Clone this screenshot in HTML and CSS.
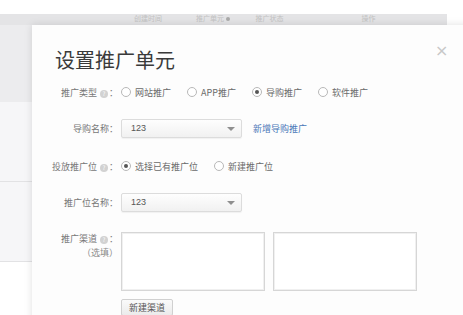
FILE: index.html
```html
<!DOCTYPE html>
<html lang="zh-CN">

<head>
  <meta charset="UTF-8">
  <meta name="viewport" content="width=device-width, initial-scale=1.0">
  <title>设置推广单元</title>
  <link rel="stylesheet" href="styles.css">
</head>

<body>
  <div class="page">
    <div class="thead">
      <span class="th th-time">创建时间</span>
      <span class="th th-unit">推广单元 <i class="dot"></i></span>
      <span class="th th-state">推广状态</span>
      <span class="th th-op">操作</span>
    </div>
    <div class="trow trow-grey"></div>
    <div class="trow"></div>
    <div class="trow"></div>
  </div>

  <div class="modal">
    <span class="close">&times;</span>
    <h2 class="modal-title">设置推广单元</h2>

    <div class="form">
      <div class="form-row">
        <div class="label">推广类型<i class="help">?</i>：</div>
        <div class="field">
          <label class="radio"><i class="circle"></i>网站推广</label>
          <label class="radio"><i class="circle"></i>APP推广</label>
          <label class="radio"><i class="circle checked"></i>导购推广</label>
          <label class="radio"><i class="circle"></i>软件推广</label>
        </div>
      </div>

      <div class="form-row row-select">
        <div class="label">导购名称：</div>
        <div class="field">
          <div class="select">123<i class="caret"></i></div>
          <a class="link" href="#">新增导购推广</a>
        </div>
      </div>

      <div class="form-row">
        <div class="label">投放推广位<i class="help">?</i>：</div>
        <div class="field">
          <label class="radio"><i class="circle checked"></i>选择已有推广位</label>
          <label class="radio"><i class="circle"></i>新建推广位</label>
        </div>
      </div>

      <div class="form-row row-select">
        <div class="label">推广位名称：</div>
        <div class="field">
          <div class="select">123<i class="caret"></i></div>
        </div>
      </div>

      <div class="form-row row-channel">
        <div class="label">推广渠道<i class="help">?</i>：<br><span class="optional">（选填）</span></div>
        <div class="field field-top">
          <div class="channels">
            <div class="box"></div>
            <div class="box"></div>
          </div>
          <button class="btn">新建渠道</button>
        </div>
      </div>
    </div>
  </div>
</body>

</html>
```

FILE: styles.css
```css
body {
  margin: 0;
  width: 463px;
  height: 315px;
  overflow: hidden;
  position: relative;
  background-color: #ffffff;
  font-family: 'Noto Sans CJK SC', 'Noto Sans', sans-serif;
  font-size: 9px;
  color: #666;
}

/* page behind the dialog */
.page {
  padding-top: 14px;
}

.thead {
  height: 11px;
  background-color: #e4e4e6;
  margin-right: 16px;
  display: flex;
  font-size: 7px;
  line-height: 9px;
  color: #c2c2c2;
}

.th {
  display: block;
}

.th-time {
  margin-left: 134px;
}

.th-unit {
  margin-left: 34px;
}

.th-state {
  margin-left: 26px;
}

.th-op {
  margin-left: 78px;
}

.dot {
  display: inline-block;
  width: 4px;
  height: 4px;
  border-radius: 50%;
  background-color: #aaa;
}

.trow {
  height: 79px;
  background-color: #f6f6f8;
  border-bottom: 1px solid #e2e2e4;
}

.trow-grey {
  height: 77px;
  background-color: #ececee;
  border-bottom: none;
}

/* dialog */
.modal {
  position: absolute;
  left: 32px;
  top: 25px;
  width: 460px;
  height: 320px;
  background-color: #fdfdfd;
  box-shadow: 0 0 8px rgba(0, 0, 0, 0.12);
}

.close {
  position: absolute;
  left: 403px;
  top: 16px;
  font-family: 'DejaVu Sans', sans-serif;
  font-size: 16px;
  color: #c8c8c8;
}

.modal-title {
  margin: 20px 0 0 23px;
  font-size: 20px;
  line-height: 30px;
  font-weight: normal;
  color: #3a3a3a;
}

.form {
  margin-top: 7px;
}

.form-row {
  display: flex;
  align-items: center;
  height: 20px;
  margin-bottom: 16px;
}

.row-select {
  margin-bottom: 18px;
}

.label {
  width: 86px;
  text-align: right;
  color: #777;
  flex-shrink: 0;
}

.help {
  display: inline-block;
  width: 8px;
  height: 8px;
  line-height: 8px;
  border-radius: 50%;
  background-color: #d2d2d2;
  color: #fff;
  font-size: 6px;
  font-style: normal;
  text-align: center;
  margin: 0 1px 0 3px;
  vertical-align: 0;
}

.field {
  display: flex;
  align-items: center;
  margin-left: 3px;
}

.radio {
  display: flex;
  align-items: center;
  margin-right: 16px;
  color: #6a6a6a;
}

.circle {
  display: inline-block;
  box-sizing: border-box;
  width: 10px;
  height: 10px;
  border: 1px solid #b8b8b8;
  border-radius: 50%;
  background-color: #fff;
  margin-right: 4px;
  position: relative;
}

.circle.checked::after {
  content: '';
  position: absolute;
  left: 2px;
  top: 2px;
  width: 4px;
  height: 4px;
  border-radius: 50%;
  background-color: #555;
}

.select {
  box-sizing: border-box;
  width: 121px;
  height: 19px;
  line-height: 17px;
  padding-left: 9px;
  border: 1px solid #dcdcdc;
  border-radius: 2px;
  background: linear-gradient(#fefefe, #f1f1f1);
  box-shadow: 0 1px 1px rgba(0, 0, 0, 0.05);
  color: #555;
  font-family: 'Liberation Sans', sans-serif;
  font-size: 9px;
  position: relative;
}

.caret {
  position: absolute;
  right: 6px;
  top: 7px;
  width: 0;
  height: 0;
  border-left: 4px solid transparent;
  border-right: 4px solid transparent;
  border-top: 4px solid #8f8f8f;
}

.link {
  margin-left: 11px;
  color: #4a78b8;
  text-decoration: none;
}

.row-channel {
  align-items: flex-start;
  height: auto;
  margin-top: 20px;
}

.row-channel .label {
  line-height: 14px;
}

.optional {
  color: #8a8a8a;
}

.field-top {
  flex-direction: column;
  align-items: flex-start;
}

.channels {
  display: flex;
  gap: 8px;
}

.box {
  box-sizing: border-box;
  width: 144px;
  height: 59px;
  border: 1px solid #d6d6d6;
  box-shadow: inset 0 0 0 1px #f0f0f0;
  background-color: #fff;
}

.btn {
  margin-top: 8px;
  height: 17px;
  padding: 0 7px;
  border: 1px solid #d0d0d0;
  border-radius: 2px;
  background: linear-gradient(#fafafa, #ebebeb);
  font-family: 'Noto Sans CJK SC', sans-serif;
  font-size: 9px;
  line-height: 15px;
  color: #555;
}
```
